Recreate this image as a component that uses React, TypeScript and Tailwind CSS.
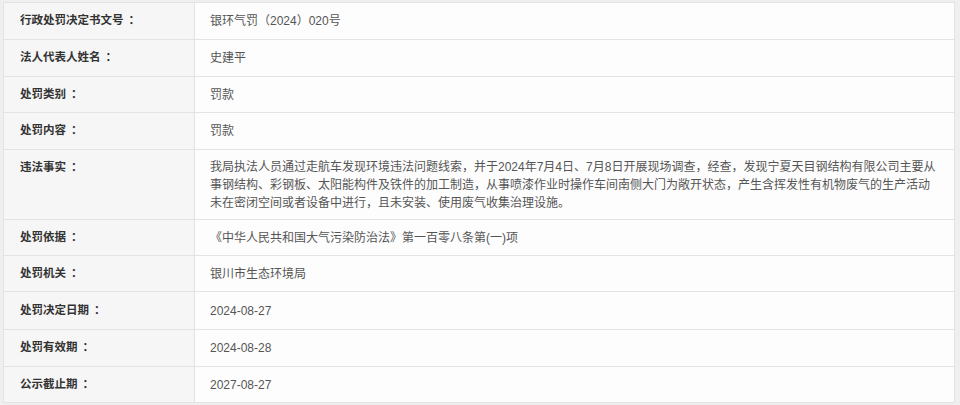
import React from "react";

type Row = { label: string; value: React.ReactNode; h: string; multi?: boolean };

const rows: Row[] = [
  { label: "行政处罚决定书文号", value: "银环气罚（2024）020号", h: "h-[37px]" },
  { label: "法人代表人姓名", value: "史建平", h: "h-[37px]" },
  { label: "处罚类别", value: "罚款", h: "h-[36px]" },
  { label: "处罚内容", value: "罚款", h: "h-[37px]" },
  {
    label: "违法事实",
    multi: true,
    h: "h-[70px]",
    value: (
      <>
        <div className="whitespace-nowrap">
          我局执法人员通过走航车发现环境违法问题线索，并于2024年7月4日、7月8日开展现场调查，经查，发现宁夏天目钢结构有限公司主要从
        </div>
        <div className="whitespace-nowrap">
          事钢结构、彩钢板、太阳能构件及铁件的加工制造，从事喷漆作业时操作车间南侧大门为敞开状态，产生含挥发性有机物废气的生产活动
        </div>
        <div className="whitespace-nowrap">未在密闭空间或者设备中进行，且未安装、使用废气收集治理设施。</div>
      </>
    ),
  },
  { label: "处罚依据", value: "《中华人民共和国大气污染防治法》第一百零八条第(一)项", h: "h-[36px]" },
  { label: "处罚机关", value: "银川市生态环境局", h: "h-[36px]" },
  { label: "处罚决定日期", value: "2024-08-27", h: "h-[38px]" },
  { label: "处罚有效期", value: "2024-08-28", h: "h-[37px]" },
  { label: "公示截止期", value: "2027-08-27", h: "h-[36px]" },
];

export default function App() {
  return (
    <div
      className="w-[960px] h-[405px] bg-[#efefef] pt-[2px] pl-[3px] overflow-hidden"
      style={{ fontFamily: '"Liberation Sans", "Noto Sans CJK SC", sans-serif' }}
    >
      <div className="w-[952px] border-t border-l border-r border-[#e3e3e3] bg-[#fdfdfd]">
        {rows.map((r, i) => (
          <div
            key={i}
            className={`grid grid-cols-[191px_1fr] border-b border-[#e3e3e3] box-border ${r.h}`}
          >
            <div
              className={`bg-[#f6f6f6] border-r border-[#e3e3e3] flex pl-[16px] text-[11.5px] font-bold text-[#333333] ${
                r.multi ? "items-start pt-[8px] leading-[18px]" : "items-center"
              }`}
            >
              <span>{r.label}</span>
              <span className="ml-[5px]">：</span>
            </div>
            {r.multi ? (
              <div className="pl-[15px] pt-[8px] text-[12px] leading-[18px] text-[#555555]">{r.value}</div>
            ) : (
              <div className="flex items-center pl-[15px] text-[12px] text-[#555555]">{r.value}</div>
            )}
          </div>
        ))}
      </div>
    </div>
  );
}
